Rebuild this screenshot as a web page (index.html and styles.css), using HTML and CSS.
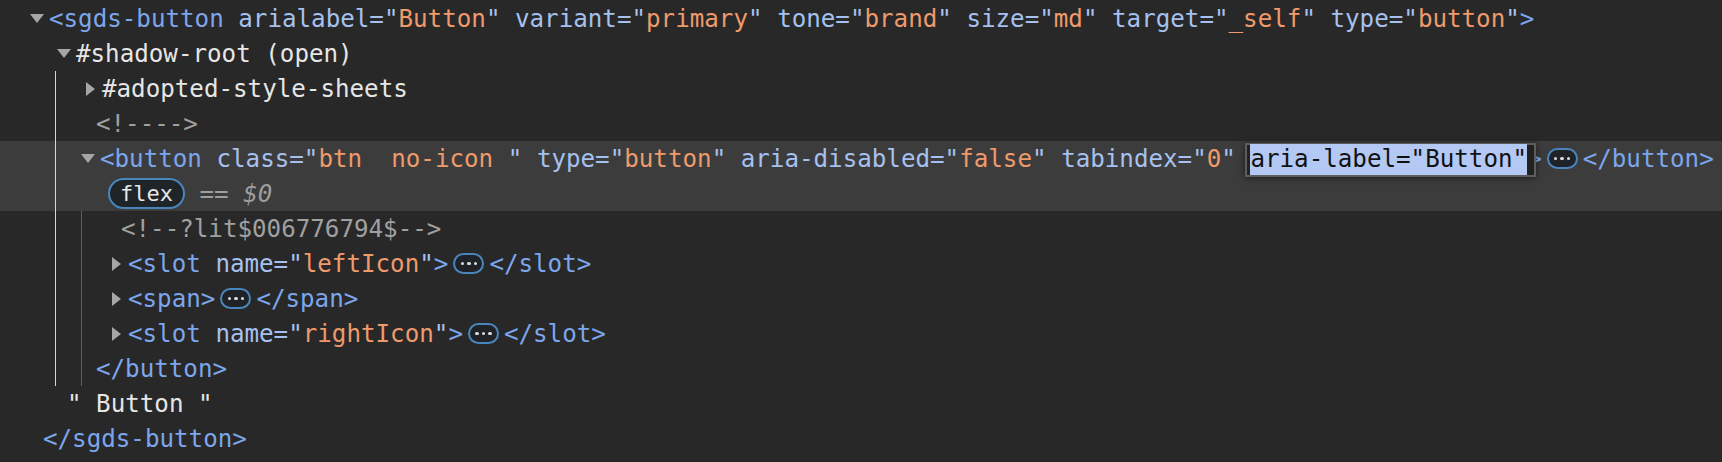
FILE: index.html
```html
<!DOCTYPE html>
<html lang="en">
<head>
<meta charset="utf-8">
<title>Elements</title>
<link rel="stylesheet" href="styles.css">
</head>
<body>
<div class="tree">
  <div class="row r-root"><span class="tw"><i class="down"></i></span><span class="seg"><span class="t">&lt;sgds-button</span> <span class="an">arialabel="</span><span class="av">Button</span><span class="an">"</span> <span class="an">variant="</span><span class="av">primary</span><span class="an">"</span> <span class="an">tone="</span><span class="av">brand</span><span class="an">"</span> <span class="an">size="</span><span class="av">md</span><span class="an">"</span> <span class="an">target="</span><span class="av">_self</span><span class="an">"</span> <span class="an">type="</span><span class="av">button</span><span class="an">"</span><span class="t">&gt;</span></span></div>
  <div class="row r-shadow"><span class="tw"><i class="down"></i></span><span class="seg txt">#shadow-root (open)</span></div>
  <div class="group g1">
    <div class="row r-l2"><span class="tw"><i class="right"></i></span><span class="seg txt">#adopted-style-sheets</span></div>
    <div class="row r-l2c"><span class="seg cmt">&lt;!----&gt;</span></div>
    <div class="sel">
      <div class="row r-btn"><span class="tw"><i class="down"></i></span><span class="seg"><span class="t">&lt;button</span> <span class="an">class="</span><span class="av">btn  no-icon </span><span class="an">"</span> <span class="an">type="</span><span class="av">button</span><span class="an">"</span> <span class="an">aria-disabled="</span><span class="av">false</span><span class="an">"</span> <span class="an">tabindex="</span><span class="av">0</span><span class="an">"</span> <span class="edit"><span class="picked">aria-label="Button"</span></span><span class="t">&gt;</span></span><span class="more"><i></i><i></i><i></i></span><span class="seg t">&lt;/button&gt;</span></div>
      <div class="row r-badge"><span class="flexb">flex</span><span class="seg eq"> == <em>$0</em></span></div>
    </div>
    <div class="group g2">
      <div class="row r-l3c"><span class="seg cmt">&lt;!--?lit$006776794$--&gt;</span></div>
      <div class="row r-l3"><span class="tw"><i class="right"></i></span><span class="seg"><span class="t">&lt;slot</span> <span class="an">name="</span><span class="av">leftIcon</span><span class="an">"</span><span class="t">&gt;</span></span><span class="more"><i></i><i></i><i></i></span><span class="seg t">&lt;/slot&gt;</span></div>
      <div class="row r-l3"><span class="tw"><i class="right"></i></span><span class="seg t">&lt;span&gt;</span><span class="more"><i></i><i></i><i></i></span><span class="seg t">&lt;/span&gt;</span></div>
      <div class="row r-l3"><span class="tw"><i class="right"></i></span><span class="seg"><span class="t">&lt;slot</span> <span class="an">name="</span><span class="av">rightIcon</span><span class="an">"</span><span class="t">&gt;</span></span><span class="more"><i></i><i></i><i></i></span><span class="seg t">&lt;/slot&gt;</span></div>
      <div class="row r-l2c"><span class="seg t">&lt;/button&gt;</span></div>
    </div>
  </div>
  <div class="row r-text"><span class="seg txt">" Button "</span></div>
  <div class="row r-close"><span class="seg t">&lt;/sgds-button&gt;</span></div>
</div>
</body>
</html>
```

FILE: styles.css
```css
html, body {
  margin: 0;
  background: #282828;
}

body {
  font-family: "DejaVu Sans Mono", "Liberation Mono", monospace;
  font-size: 24.2px;
  color: #e3e3e3;
}

.tree {
  padding-top: 1px;
}

.row {
  display: flex;
  align-items: center;
  height: 35px;
  white-space: pre;
}

.seg {
  line-height: 35px;
  padding-top: 2px;
}

.tw {
  flex: none;
  width: 20px;
  display: flex;
  align-items: center;
}

.down {
  width: 0;
  height: 0;
  margin-left: 1px;
  border-left: 7px solid transparent;
  border-right: 7px solid transparent;
  border-top: 9px solid #a6a6a6;
}

.right {
  width: 0;
  height: 0;
  margin-left: 4px;
  border-top: 7px solid transparent;
  border-bottom: 7px solid transparent;
  border-left: 9px solid #a6a6a6;
}

/* indentation per row kind */
.r-root { padding-left: 29px; }
.r-shadow { padding-left: 56px; }
.r-l2 { padding-left: 82px; }
.r-l2c { padding-left: 96px; }
.r-btn { padding-left: 80px; }
.r-badge { padding-left: 108px; }
.r-l3c { padding-left: 121px; }
.r-l3 { padding-left: 108px; }
.r-text { padding-left: 67px; }
.r-close { padding-left: 43px; }

/* tokens */
.t { color: #7ca6ec; }
.an { color: #a6c1ef; }
.av { color: #ef9a6b; }
.txt { color: #e6e6e6; }
.cmt { color: #a0a0a0; }
.eq { color: #9e9e9e; }
.eq em { font-style: italic; }

/* selected node */
.sel {
  background: #3c3c3c;
}

/* tree guide lines */
.group {
  position: relative;
}

.group::before {
  content: "";
  position: absolute;
  top: 0;
  bottom: 0;
  width: 1px;
}

.g1::before {
  left: 55px;
  background: #d6d6d6;
}

.g2::before {
  left: 81px;
  background: #5e5e5e;
}

/* attribute being edited */
.edit {
  position: relative;
  z-index: 0;
}

.edit::before {
  content: "";
  position: absolute;
  left: -5px;
  right: -9px;
  top: -2px;
  bottom: -4px;
  border: 2px solid #5d5d5d;
  background: #222222;
  box-shadow: 0 1px 6px rgba(0, 0, 0, 0.55);
  z-index: -1;
}

.picked {
  background: #b4c8f4;
  color: #111111;
  padding: 1px 0 2px;
}

/* collapsed children badge */
.more {
  flex: none;
  box-sizing: border-box;
  width: 31px;
  height: 21px;
  margin: 0 5px;
  border: 2px solid #4a86bd;
  border-radius: 11px;
  background: #1f2327;
  display: flex;
  align-items: center;
  justify-content: center;
  gap: 3px;
}

.more i {
  width: 3.5px;
  height: 3.5px;
  border-radius: 50%;
  background: #dcdcdc;
}

/* layout badge */
.flexb {
  flex: none;
  box-sizing: border-box;
  height: 31px;
  padding: 0 10px;
  border: 2px solid #4a86bd;
  border-radius: 16px;
  background: #1f2429;
  color: #e6e6e6;
  font-size: 22px;
  line-height: 27px;
}
```
